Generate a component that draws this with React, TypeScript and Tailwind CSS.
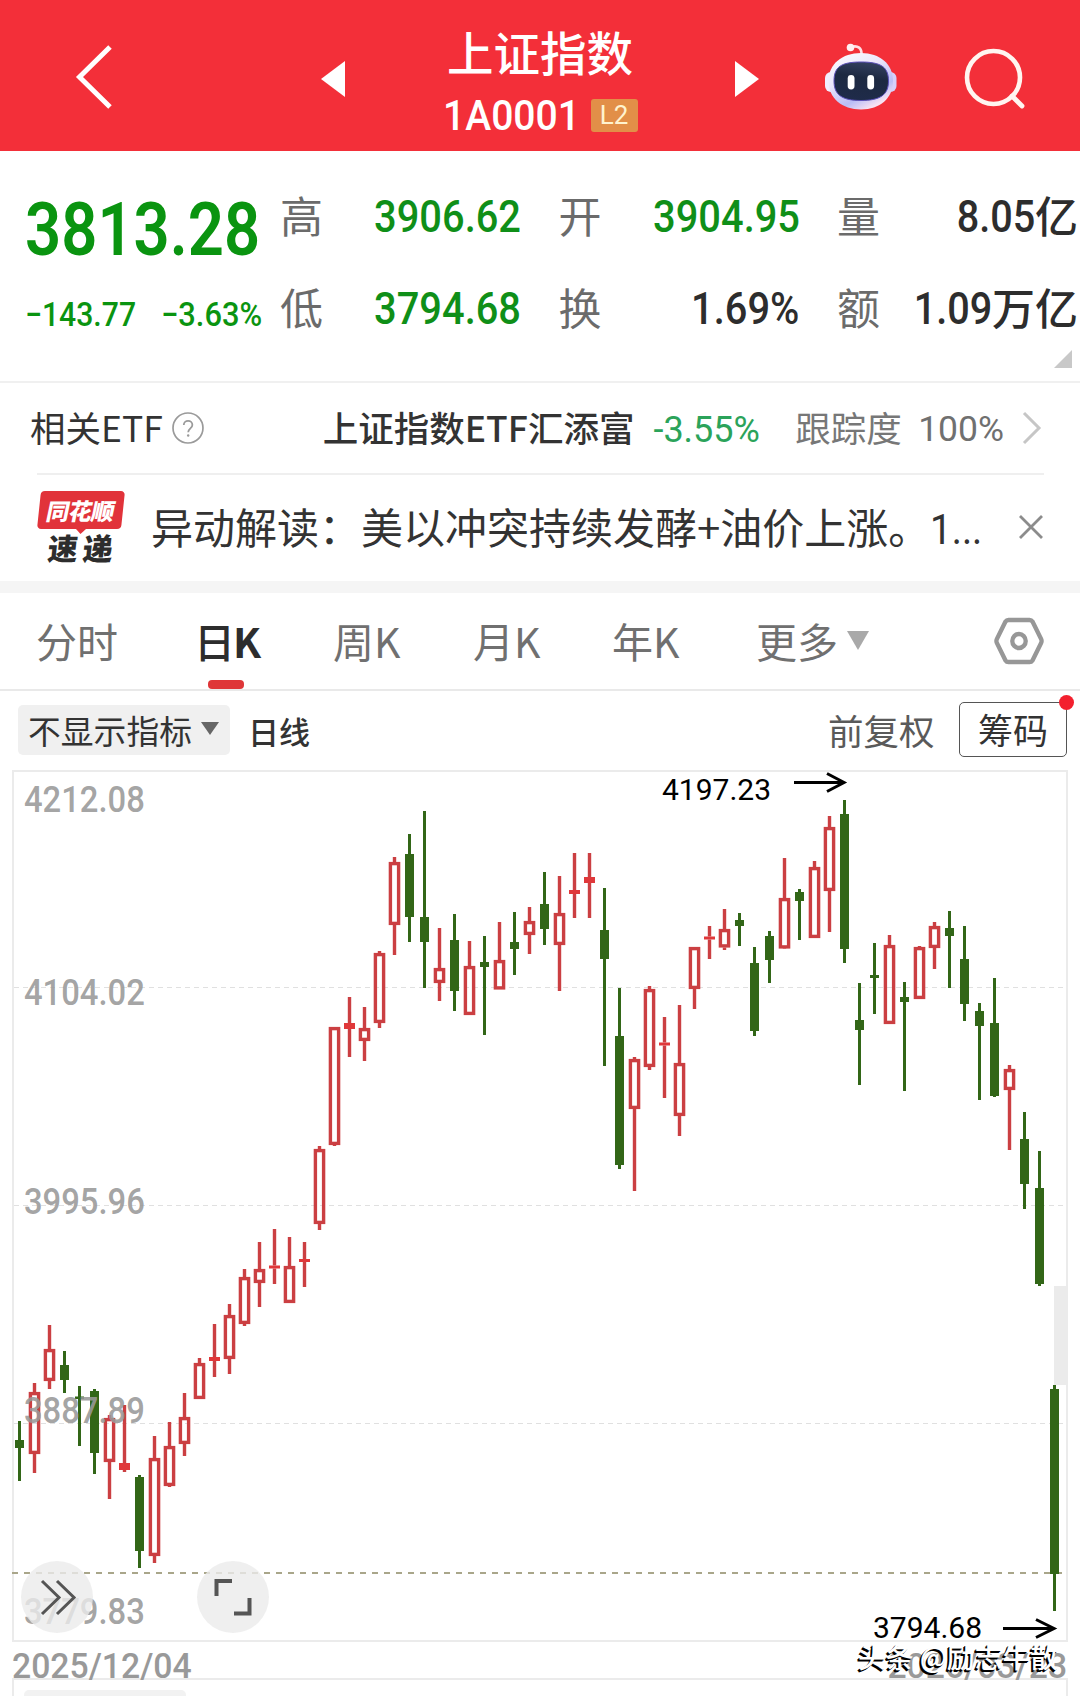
import React from 'react'
import clsx from 'clsx'

type Candle = [high: number, top: number, bottom: number, low: number, up: 0 | 1]

// one entry per trading day, y positions on the chart canvas
const candles: Candle[] = [
    [1421, 1440, 1448, 1481, 0], [1383, 1392, 1454, 1473, 1], [1325, 1349, 1381, 1389, 1],
    [1351, 1365, 1380, 1393, 0], [1386, 1396.5, 1399, 1446, 0], [1389, 1391, 1453, 1474, 0],
    [1415, 1418, 1462, 1499, 1], [1405, 1463, 1470, 1472, 1], [1475, 1477, 1551, 1568, 0],
    [1436, 1458, 1556, 1563, 1], [1422, 1446, 1486, 1487, 1], [1393, 1417, 1444, 1456, 1],
    [1358, 1363, 1399, 1399, 1], [1324, 1357, 1361, 1377, 1], [1304, 1315, 1359, 1374, 1],
    [1269, 1277, 1324, 1326, 1], [1242, 1269, 1283, 1307, 1], [1229, 1265.5, 1268.5, 1284, 1],
    [1237, 1266, 1303, 1303, 1], [1242, 1259, 1262, 1287, 1], [1146, 1149, 1224, 1230, 1],
    [1027, 1027, 1145, 1146, 1], [997, 1023, 1029, 1057, 1], [1007, 1028, 1041, 1061, 1],
    [951, 953, 1023, 1028, 1], [857, 862, 925, 955, 1], [834, 854, 917, 942, 0],
    [811, 917, 942, 988, 0], [928, 968, 983, 1001, 1], [914, 940, 991, 1011, 0],
    [941, 966, 1015, 1015, 1], [936, 962, 967, 1035, 0], [922, 960, 989.5, 989.5, 1],
    [912, 942, 949, 975, 0], [907, 921, 935, 954, 1], [872, 904, 929, 945, 0],
    [876, 913, 945, 991, 1], [853, 890, 894, 918, 1], [853, 877, 883, 918, 1],
    [888, 930, 959, 1066, 0], [988, 1036, 1165, 1169, 0], [1057, 1059, 1109, 1191, 1],
    [986, 989, 1067, 1070, 1], [1017, 1042.5, 1045.5, 1098, 1], [1005, 1063, 1116, 1136, 1],
    [947, 947, 989, 1009, 1], [926, 936.5, 939.5, 959, 1], [909, 929, 947.5, 950, 1],
    [913, 920, 926, 946, 0], [947, 963, 1031, 1036, 0], [931, 936, 960, 983, 0],
    [858, 898, 948.5, 949, 1], [889, 892, 901, 940, 0], [861, 867, 938, 938, 1],
    [816, 827, 891, 932, 1], [800, 814, 949, 963, 0], [983, 1020, 1030, 1085, 0],
    [943, 975, 978, 1014, 0], [935, 945, 1024, 1024, 1], [982, 997, 1002, 1091, 0],
    [946, 947, 999, 999, 1], [922, 926, 948, 969, 1], [911, 928, 936, 988, 0],
    [926, 959, 1004, 1021, 0], [1003, 1011, 1026, 1100, 0], [978, 1023, 1096, 1097, 0],
    [1065, 1069, 1090, 1150, 1], [1112, 1139, 1184, 1209, 0], [1151, 1188, 1284, 1286, 0],
    [1385, 1389, 1574, 1611, 0],
]

const quotes = [
    { label: '高', value: '3906.62', green: true },
    { label: '开', value: '3904.95', green: true },
    { label: '量', value: '8.05', unit: '亿' },
    { label: '低', value: '3794.68', green: true },
    { label: '换', value: '1.69%' },
    { label: '额', value: '1.09', unit: '万亿' },
]

const tabs = [
    { title: '分时', width: 'w-[158px]' },
    { title: '日K', width: 'w-[139px]', active: true },
    { title: '周K', width: 'w-[140px]' },
    { title: '月K', width: 'w-[139px]' },
    { title: '年K', width: 'w-[144px]' },
    { title: '更多', width: 'w-[91px]' },
]

const axisLabels = [
    { text: '4212.08', top: 'top-[9px]' },
    { text: '4104.02', top: 'top-[202px]' },
    { text: '3995.96', top: 'top-[411px]' },
    { text: '3887.89', top: 'top-[620px]' },
    { text: '3779.83', top: 'top-[821px]' },
]

const Robot = () => (
    <svg className="h-[70px] w-[74px]" viewBox="0 0 74 70">
        <defs>
            <linearGradient id="shell" x1="0" y1="0" x2="0.6" y2="1">
                <stop offset="0" stopColor="#ffffff" />
                <stop offset="0.45" stopColor="#ebe6fb" />
                <stop offset="0.8" stopColor="#b9bdf6" />
                <stop offset="1" stopColor="#f8e2f2" />
            </linearGradient>
            <linearGradient id="visor" x1="0.6" y1="0" x2="0.4" y2="1">
                <stop offset="0" stopColor="#33405f" />
                <stop offset="0.4" stopColor="#1d2941" />
                <stop offset="1" stopColor="#1f2b4a" />
            </linearGradient>
        </defs>
        <path d="M27 6c7-2 11 1 10.500 8" fill="none" stroke="#ffdfe5" strokeWidth="2.600" strokeLinecap="round" />
        <circle cx="26.500" cy="6.500" r="3.800" fill="#fff0f2" />
        <rect x="1" y="31" width="14" height="20" rx="6" fill="#f1edff" />
        <rect x="58.500" y="31" width="14" height="20" rx="6" fill="#d6d0fa" />
        <path d="M37 12c19 0 32 11 32 28S56 68.500 37 68.500 4.500 57 4.500 40 18 12 37 12z" fill="url(#shell)" />
        <path d="M37 21c20 0 27.500 5 27.500 19S56 59.500 37 59.500 10 54 10 40 17 21 37 21z" fill="url(#visor)" stroke="#5a4fb8" strokeWidth="1" />
        <rect x="23.700" y="34" width="6.800" height="14.500" rx="3.400" fill="#fff" />
        <rect x="43.300" y="34" width="6.800" height="14.500" rx="3.400" fill="#fff" />
    </svg>
)

const Header = () => (
    <header className="flex h-[151px] items-center bg-[#f32f39] pl-[75px] text-white">
        <svg className="h-[68px] w-[38px]" viewBox="0 0 38 68">
            <path d="M35 5L4.500 35L35 65" fill="none" stroke="#fff" strokeWidth="5" />
        </svg>
        <svg className="mt-[7px] ml-[208px] h-[36px] w-[24px]" viewBox="0 0 24 36">
            <path d="M24 0v36L0 18z" fill="#fff" />
        </svg>
        <div className="flex w-[390px] flex-col items-center pt-[12px]">
            <h1 className="text-[46.500px] leading-[50px] font-medium">上证指数</h1>
            <div className="mt-[18px] flex h-[44px] items-center">
                <span className="w-[136px] font-[Roboto] text-[42.500px] leading-[44px] font-medium">
                    <span className="inline-block origin-left scale-x-[0.92]">1A0001</span>
                </span>
                <span className="ml-[12px] flex h-[33px] w-[47px] items-center justify-center rounded-[3px] bg-[#e28f48] font-[Roboto] text-[26px] text-[#fff3cf]">L2</span>
            </div>
        </div>
        <svg className="mt-[7px] h-[36px] w-[24px]" viewBox="0 0 24 36">
            <path d="M0 0v36l24-18z" fill="#fff" />
        </svg>
        <div className="ml-[65px]">
            <Robot />
        </div>
        <svg className="mt-[6px] ml-[65px] h-[62px] w-[62px]" viewBox="0 0 62 62">
            <circle cx="30.500" cy="29.500" r="26.500" fill="none" stroke="#fff5f0" strokeWidth="4.600" />
            <path d="M49 48l10 10" stroke="#fff5f0" strokeWidth="4.800" strokeLinecap="round" />
        </svg>
    </header>
)

const Quotes = () => (
    <section className="relative flex h-[232px] border-b-2 border-[#f0f0f0]">
        <div className="w-[280px] pt-[34px] pl-[25px] font-[Roboto] text-[#0a9410]">
            <div className="w-[240px] origin-left scale-x-[0.845] text-[75px] leading-[88px] font-semibold">3813.28</div>
            <div className="mt-[22px] flex text-[33.500px] leading-[40px] font-medium">
                <span className="w-[136px]"><span className="inline-block origin-left scale-x-[0.9]">−143.77</span></span>
                <span className="w-[110px]"><span className="inline-block origin-left scale-x-[0.92]">−3.63%</span></span>
            </div>
        </div>
        <div className="grid h-[184px] grid-cols-[241px_241px_241px] gap-x-[37.500px] pt-[20px]">
            {quotes.map(({ label, value, green, unit }) => (
                <div key={label} className="flex h-[92px] items-center justify-between">
                    <span className="-mt-[5px] text-[43px] text-[#6b6b6b]">{label}</span>
                    <span className={clsx('flex items-center text-[45px] font-medium', green ? 'text-[#0f8f18]' : 'text-[#2d2d2d]')}>
                        <span className={clsx('origin-right font-[Roboto]', unit ? 'scale-x-[0.88]' : 'scale-x-[0.885]')}>{value}</span>
                        {unit && <span className="-mt-[5px] text-[43px]">{unit}</span>}
                    </span>
                </div>
            ))}
        </div>
        <svg className="absolute right-[8px] bottom-[13px] h-[18px] w-[18px]" viewBox="0 0 18 18">
            <path d="M18 0v18H0z" fill="#c8c8c8" />
        </svg>
    </section>
)

const RelatedEtf = () => (
    <section className="mr-[38px] ml-[30px] flex h-[90px] items-center text-[35.500px] text-[#333]">
        <span className="-mt-[2px] w-[142px] whitespace-nowrap">相关ETF</span>
        <svg className="mt-[1px] h-[34px] w-[34px]" viewBox="0 0 34 34">
            <circle cx="16" cy="16" r="15" fill="none" stroke="#9a9a9a" strokeWidth="1.700" />
            <path d="M11.800 13c0-5.500 8.600-5.500 8.600 0 0 3.200-4.200 3.500-4.200 7.200" fill="none" stroke="#9a9a9a" strokeWidth="1.800" />
            <circle cx="16.200" cy="23.500" r="1.200" fill="#9a9a9a" />
        </svg>
        <span className="-mt-[2px] ml-[117px] w-[331px] whitespace-nowrap font-medium">上证指数ETF汇添富</span>
        <span className="mt-[4px] w-[142px] font-[Roboto] text-[36px] text-[#2ba35a]">-3.55%</span>
        <span className="-mt-[2px] w-[123px] text-[35.500px] text-[#777]">跟踪度</span>
        <span className="mt-[4px] w-[104px] font-[Roboto] text-[35.500px] text-[#707070]">100%</span>
        <svg className="-mt-[1px] h-[34px] w-[20px] shrink-0" viewBox="0 0 20 34">
            <path d="M2 2l15 15L2 32" fill="none" stroke="#c6c6c6" strokeWidth="3" />
        </svg>
    </section>
)

const News = () => (
    <section className="mr-[36px] ml-[37px] flex h-[108px] items-center border-t-2 border-[#efefef] pb-[2px]">
        <div className="w-[114px]">
            <div className="relative ml-[2px] flex h-[38px] w-[84px] -skew-x-6 items-center justify-center rounded-[4px] bg-[#e1333a]">
                <span className="-skew-x-6 text-[23px] leading-none font-black tracking-[-0.5px] text-white">同花顺</span>
                <span className="absolute bottom-[-5px] left-[38px] h-0 w-0 border-x-[6px] border-t-[6px] border-x-transparent border-t-[#e1333a]" />
            </div>
            <div className="mt-[3px] ml-[11px] flex -skew-x-6 gap-[5px] text-[30px] leading-[31px] font-black text-[#2d2d2d]">
                <span>速</span>
                <span>递</span>
            </div>
        </div>
        <p className="w-[868px] whitespace-nowrap text-[42px] text-[#333]">
            异动解读：美以冲突持续发酵+油价上涨。<span className="inline-block origin-left scale-x-[0.92] font-[Roboto]">1...</span>
        </p>
        <svg className="h-[26px] w-[26px] shrink-0" viewBox="0 0 26 26">
            <path d="M2 2l22 22M24 2L2 24" stroke="#8c8c8c" strokeWidth="2.800" />
        </svg>
    </section>
)

const PeriodTabs = () => (
    <nav className="flex h-[98px] items-center border-b-2 border-[#e9e9e9] pl-[36px] text-[41px] text-[#707070]">
        {tabs.map(({ title, width, active }) => (
            <div key={title} className={clsx('relative flex h-full items-center whitespace-nowrap', width, active && 'font-medium text-[#2d2d2d]')}>
                {title.slice(0, -1)}
                <span className={clsx(active && '-ml-[2px] font-bold')}>{title.slice(-1)}</span>
                {active && <span className="absolute bottom-0 left-[14px] h-[9px] w-[36px] rounded-[4px] bg-[#df3638]" />}
            </div>
        ))}
        <svg className="-mt-[1px] h-[19px] w-[22px]" viewBox="0 0 22 19">
            <path d="M0 0h22L11 19z" fill="#a9a9a9" />
        </svg>
        <svg className="-mt-[1px] ml-[125px] h-[50px] w-[50px]" viewBox="0 0 52 50" preserveAspectRatio="none">
            <path d="M15 4h22q2 0 3 1.500l9 17.500q1 2 0 4l-9 17.500q-1 1.500-3 1.500H15q-2 0-3-1.500L3 27q-1-2 0-4l9-17.500Q13 4 15 4z" fill="none" stroke="#979797" strokeWidth="4.500" />
            <circle cx="26" cy="25" r="7" fill="none" stroke="#979797" strokeWidth="4.500" />
        </svg>
    </nav>
)

const Toolbar = () => (
    <section className="flex h-[79px] items-center pb-[2px] pl-[18px] text-[#333]">
        <button className="flex h-[50px] w-[212px] items-center gap-[9px] rounded-[5px] bg-[#f0f0f0] pl-[10px] text-[32.800px] whitespace-nowrap">
            不显示指标
            <svg className="-mt-[3px] h-[13px] w-[18px] shrink-0" viewBox="0 0 18 13">
                <path d="M0 0h18L9 13z" fill="#666" />
            </svg>
        </button>
        <span className="mt-[3px] ml-[18px] w-[580px] text-[31px] font-medium">日线</span>
        <span className="w-[131px] text-[35.500px] text-[#5a5a5a]">前复权</span>
        <button className="relative flex h-[55px] w-[108px] items-center justify-center rounded-[5px] border-[1.500px] border-[#555] text-[35px]">
            筹码
            <span className="absolute -top-[8px] -right-[8px] h-[15px] w-[15px] rounded-full bg-[#f3202e]" />
        </button>
    </section>
)

const CandleShape = ({ candle, x }: { candle: Candle, x: number }) => {
    const [high, top, bottom, low, up] = candle

    if (!up) {
        return (
            <g fill="#326617">
                <rect x={x - 1.5} y={high} width="3" height={low - high} />
                <rect x={x - 4.5} y={top} width="9" height={bottom - top} />
            </g>
        )
    }

    return (
        <g fill="#cb3f42">
            <rect x={x - 1.7} y={high} width="3.400" height={top - high} />
            <rect x={x - 1.7} y={bottom} width="3.400" height={low - bottom} />
            {bottom - top > 7
                ? <rect x={x - 4.1} y={top + 1.6} width="8.200" height={bottom - top - 3.2} fill="none" stroke="#cb3f42" strokeWidth="3.400" />
                : <rect x={x - 5.5} y={top} width="11" height={bottom - top} fill="#e0383a" />}
        </g>
    )
}

const Chart = () => (
    <section className="relative h-[926px] overflow-hidden">
        <svg className="block h-[926px] w-[1080px]" viewBox="0 770 1080 926">
            <g fill="none" stroke="#ebebeb" strokeWidth="2">
                <path d="M13 771H1067V1641H13z" />
                <path d="M13 1700V1679H1067V1700" />
            </g>
            <rect x="24" y="1690" width="162" height="30" rx="5" fill="#f2f2f2" />
            <g stroke="#e0e0e0" strokeWidth="1.200" strokeDasharray="5 4">
                <path d="M14 987.500H1066" />
                <path d="M14 1205.500H1066" />
                <path d="M14 1423.500H1066" />
            </g>
            <rect x="1054" y="1286" width="13" height="99" fill="#ebebeb" />
            <path d="M12 1573H1062" stroke="#a9a68a" strokeWidth="2" strokeDasharray="6 6" />
            {candles.map((candle, index) => (
                <CandleShape key={index} candle={candle} x={19.5 + index * 15} />
            ))}
            <g fill="none" stroke="#000" strokeWidth="3">
                <path d="M794 782.500H843M827 773.500L844 782.500L827 791.500" />
                <path d="M1003 1628.500H1053M1036 1619.500L1054 1628.500L1036 1637.500" />
            </g>
        </svg>

        {axisLabels.map(({ text, top }) => (
            <span key={text} className={clsx('absolute left-[24px] origin-left scale-x-[0.91] font-[Roboto] text-[36px] leading-[42px] font-medium text-[#999]/90', top)}>
                {text}
            </span>
        ))}

        <span className="absolute top-[2px] left-[662px] font-[Roboto] text-[30px] leading-[36px] text-black">4197.23</span>
        <span className="absolute top-[840px] left-[873px] font-[Roboto] text-[30px] leading-[36px] text-black">3794.68</span>

        <span className="absolute top-[875px] left-[12px] origin-left scale-x-[0.95] font-[Roboto] text-[35.500px] leading-[42px] font-medium text-[#999]">2025/12/04</span>
        <span className="absolute top-[875px] right-[13px] origin-right scale-x-[0.95] font-[Roboto] text-[35.500px] leading-[42px] font-medium text-[#999]">2026/03/23</span>

        <button className="absolute top-[791px] left-[21px] h-[72px] w-[72px] rounded-full bg-[#ebebeb]/80">
            <svg viewBox="0 0 72 72" fill="none" stroke="#555" strokeWidth="3">
                <path d="M21 20l17 16.500L21 53M36 20l17 16.500L36 53" />
            </svg>
        </button>
        <button className="absolute top-[791px] left-[197px] h-[72px] w-[72px] rounded-full bg-[#ebebeb]/80">
            <svg viewBox="0 0 72 72" fill="none" stroke="#555" strokeWidth="4">
                <path d="M19.500 35V20H35M52.500 37V52.500H37" />
            </svg>
        </button>

        <span className="absolute top-[869px] left-[858px] text-[27.800px] leading-[34px] font-medium whitespace-nowrap text-white [text-shadow:-2px_2px_0_#000,-1px_1px_0_#000]">
            头条 @励志牛散
        </span>
    </section>
)

const App = () => {
    return (
        <div className="h-[1696px] w-[1080px] overflow-hidden bg-white font-['Noto_Sans_CJK_SC',sans-serif]">
            <Header />
            <Quotes />
            <RelatedEtf />
            <News />
            <div className="h-[12px] bg-[#f5f5f5]" />
            <PeriodTabs />
            <Toolbar />
            <Chart />
        </div>
    )
}

export default App
